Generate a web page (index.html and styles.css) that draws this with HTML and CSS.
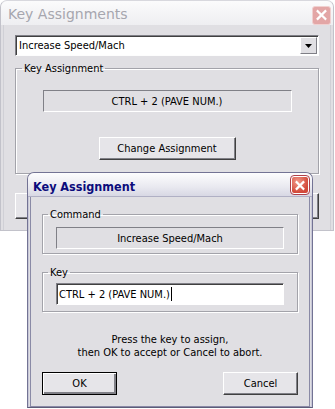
FILE: index.html
```html
<!DOCTYPE html>
<html lang="en">
<head>
  <meta charset="UTF-8">
  <title>Key Assignments</title>
  <link rel="stylesheet" href="styles.css">
</head>
<body>
  <div class="win back">
    <div class="titlebar">
      <span class="title">Key Assignments</span>
      <span class="close"><svg width="18" height="18" viewBox="0 0 18 18"><path d="M5 5 L13 13 M13 5 L5 13" stroke="#fff" stroke-width="2.4" stroke-linecap="square"/></svg></span>
    </div>
    <div class="body">
      <div class="combo">
        <span class="combo-text">Increase Speed/Mach</span>
        <span class="combo-btn"><svg width="7" height="4" viewBox="0 0 7 4"><path d="M0 0 H7 L3.5 4 Z" fill="#000"/></svg></span>
      </div>
      <fieldset class="group big">
        <legend>Key Assignment</legend>
        <div class="field wide">CTRL + 2 (PAVE NUM.)</div>
        <div class="btn change">Change Assignment</div>
      </fieldset>
      <div class="hidden-row">
        <div class="btn ghost"></div>
        <div class="btn ghost"></div>
      </div>
    </div>
  </div>

  <div class="win front">
    <div class="titlebar">
      <span class="title">Key Assignment</span>
      <span class="close"><svg width="17" height="17" viewBox="0 0 17 17"><path d="M5 5 L12 12 M12 5 L5 12" stroke="#fff" stroke-width="2.4" stroke-linecap="square"/></svg></span>
    </div>
    <div class="body">
      <fieldset class="group cmd">
        <legend>Command</legend>
        <div class="field">Increase Speed/Mach</div>
      </fieldset>
      <fieldset class="group key">
        <legend>Key</legend>
        <div class="input">CTRL + 2 (PAVE NUM.)<span class="caret"></span></div>
      </fieldset>
      <p class="hint">Press the key to assign,<br>then OK to accept or Cancel to abort.</p>
      <div class="buttons">
        <div class="btn default">OK</div>
        <div class="btn">Cancel</div>
      </div>
    </div>
  </div>
</body>
</html>
```

FILE: styles.css
```css
html {
  box-sizing: border-box;
}
*, *:before, *:after {
  box-sizing: inherit;
}
body {
  margin: 0;
  width: 335px;
  height: 409px;
  background: #fff;
  font-family: "DejaVu Sans", sans-serif;
  font-stretch: condensed;
  font-size: 11px;
  color: #000;
  position: relative;
  overflow: hidden;
}

.win {
  position: absolute;
  background: #e0dfe3;
  border-radius: 7px 7px 0 0;
}
.win .titlebar {
  display: flex;
  align-items: center;
  justify-content: space-between;
}
.close {
  display: flex;
  align-items: center;
  justify-content: center;
  border-radius: 3px;
}

/* background window, inactive */
.back {
  left: 0;
  top: 0;
  width: 334px;
  height: 231px;
  border: 1px solid #c2c2ca;
  border-top-color: #d8d8de;
}
.back .titlebar {
  height: 24px;
  padding: 0 2px 0 7px;
  background: linear-gradient(#fbfbfc, #eeeef1);
  border-radius: 6px 6px 0 0;
}
.back .title {
  font-family: "DejaVu Sans", sans-serif;
  font-stretch: normal;
  font-size: 14px;
  color: #a6a6ae;
  padding-top: 2px;
}
.back .close {
  width: 19px;
  height: 19px;
  margin-top: 4px;
  background: #e3a6a6;
  border: 1px solid #f0d0d0;
}
.back .body {
  height: 205px;
  margin: 0 2px;
  border-left: 1px solid #d0d0d6;
  border-right: 1px solid #d0d0d6;
  padding: 10px 11px 0 11px;
  display: flex;
  flex-direction: column;
}

.combo {
  height: 21px;
  display: flex;
  align-items: center;
  justify-content: space-between;
  background: #fff;
  border: 1px solid;
  border-color: #7f7f86 #fdfdfd #fdfdfd #7f7f86;
  box-shadow: inset 1px 1px 0 #404040;
  padding: 0 1px 0 3px;
}
.combo-btn {
  width: 17px;
  height: 17px;
  display: flex;
  align-items: center;
  justify-content: center;
  background: #e0dfe3;
  border: 1px solid;
  border-color: #fff #7f7f86 #7f7f86 #fff;
}

.group {
  margin: 0;
  border: 1px solid #a3a3aa;
  box-shadow: 1px 1px 0 #fff, inset 1px 1px 0 #fff;
  padding: 0 13px;
  display: flex;
  flex-direction: column;
}
.group legend {
  padding: 0 2px;
  margin-left: -8px;
}
.group.big {
  margin-top: 6px;
  height: 112px;
  padding: 15px 13px 0;
  align-items: center;
}
.group.big legend {
  margin-left: -7px;
}

.field {
  height: 22px;
  display: flex;
  align-items: center;
  justify-content: center;
  border: 1px solid;
  border-color: #808087 #fff #fff #808087;
}
.field.wide {
  width: 249px;
}

.btn {
  height: 23px;
  display: flex;
  align-items: center;
  justify-content: center;
  background: #e6e5e9;
  border: 1px solid;
  border-color: #fff #404040 #404040 #fff;
  box-shadow: inset -1px -1px 0 #808087;
}
.change {
  width: 137px;
  margin-top: 25px;
}
.hidden-row {
  display: flex;
  justify-content: space-between;
  margin-top: 19px;
}
.ghost {
  width: 100px;
  height: 26px;
}

/* front window, active */
.front {
  left: 27px;
  top: 172px;
  width: 286px;
  height: 236px;
  border: 1px solid #737394;
  border-bottom-color: #5c5c78;
  background: #e0dfe3;
  box-shadow: inset 0 0 0 1px #c8c8d8;
}
.front .titlebar {
  height: 24px;
  padding: 0 3px 0 5px;
  background: linear-gradient(#fdfdfe, #e9e9f0 60%, #d8d8e4);
  border-radius: 6px 6px 0 0;
  border-bottom: 1px solid #b0b0c4;
}
.front .title {
  font-family: "DejaVu Sans", sans-serif;
  font-stretch: condensed;
  font-weight: bold;
  font-size: 12.5px;
  color: #0c0c7c;
  padding-top: 3px;
}
.front .close {
  width: 18px;
  height: 18px;
  margin-top: 1px;
  background: radial-gradient(circle at 35% 30%, #f29a8a, #d2493a 70%);
  border: 1px solid #fff;
  outline: 1px solid #b0404a;
}
.front .body {
  height: 210px;
  margin: 0 2px;
  border: 1px solid #8a8aa6;
  border-top: 0;
  padding: 11px 11px 0;
  display: flex;
  flex-direction: column;
}
.front .group {
  height: 46px;
}
.front .group.cmd {
  padding-top: 6px;
}
.front .group.key {
  margin-top: 12px;
  padding-top: 4px;
}
.input {
  height: 22px;
  display: flex;
  align-items: center;
  background: #fff;
  border: 1px solid;
  border-color: #808087 #fff #fff #808087;
  box-shadow: inset 1px 1px 0 #404040;
  padding-left: 2px;
}
.caret {
  width: 1px;
  height: 14px;
  background: #000;
  margin-left: 1px;
}
.hint {
  margin: 21px 0 0;
  text-align: center;
  line-height: 13px;
}
.buttons {
  display: flex;
  justify-content: space-between;
  margin-top: 13px;
}
.buttons .btn {
  width: 75px;
}
.btn.default {
  border-color: #000;
  box-shadow: inset 1px 1px 0 #fff, inset -2px -2px 0 #808087;
}
```
